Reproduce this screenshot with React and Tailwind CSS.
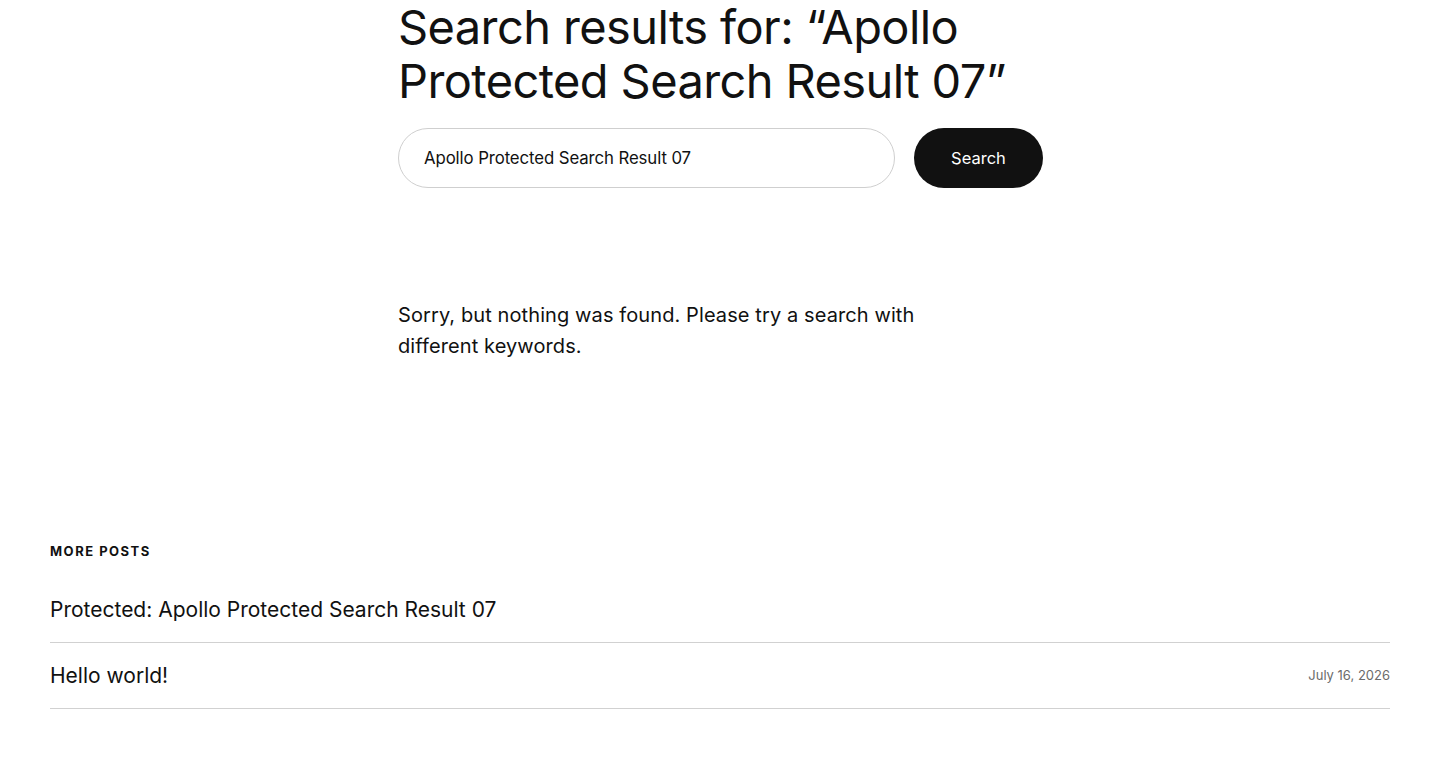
export default function App() {
  return (
    <div className="min-h-[779px] bg-white text-[#111111]" style={{ fontFamily: "Inter, 'Noto Sans', sans-serif" }}>
      {/* Search header */}
      <main className="w-[660px] ml-[398px]">
        <h1 className="text-[47px] leading-[54px] font-normal tracking-[-0.6px]">
          Search results for: “Apollo
          <br />
          Protected Search Result 07”
        </h1>
        <form className="flex gap-[19px] mt-[20px]" onSubmit={(e) => e.preventDefault()}>
          <input
            type="search"
            defaultValue="Apollo Protected Search Result 07"
            className="shrink-0 w-[497px] h-[60px] rounded-full border border-[#cfcfcf] px-[25px] text-[16.8px] tracking-[-0.1px] outline-none"
          />
          <button className="shrink-0 w-[129px] h-[60px] rounded-full bg-[#111111] text-white text-[16.5px]">
            Search
          </button>
        </form>
        <p className="mt-[112px] text-[20px] leading-[31px] tracking-[0.1px]">
          Sorry, but nothing was found. Please try a search with
          <br />
          different keywords.
        </p>
      </main>

      {/* More posts */}
      <section className="px-[50px] mt-[180px]">
        <h2 className="text-[13px] font-bold tracking-[1.5px] uppercase">More posts</h2>
        <ul className="mt-[15px]">
          <li className="flex items-center justify-between h-[66px] border-b border-[#d1d1d1] pt-[2px]">
            <a href="#" className="text-[21px]">Protected: Apollo Protected Search Result 07</a>
          </li>
          <li className="flex items-center justify-between h-[66px] border-b border-[#d1d1d1] pt-[2px]">
            <a href="#" className="text-[21px]">Hello world!</a>
            <span className="text-[13px] text-[#6b6b6b]">July 16, 2026</span>
          </li>
        </ul>
      </section>
    </div>
  );
}
